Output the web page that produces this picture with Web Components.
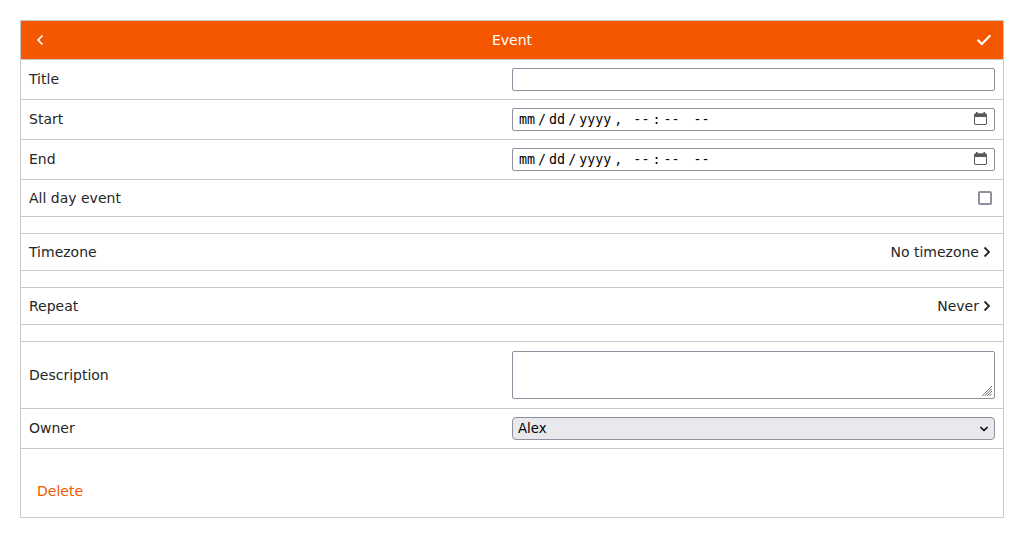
<!DOCTYPE html>
<html lang="en">
<head>
<meta charset="utf-8">
<title>Event</title>
<style>
body { margin: 20px; background: #fff; color: #262626; font: 14px/20px "DejaVu Sans", sans-serif; }
</style>
</head>
<body>
<event-form>
  <form-header>Event</form-header>
  <form-row label="Title"><field-box></field-box></form-row>
  <form-row label="Start"><date-field></date-field></form-row>
  <form-row label="End"><date-field></date-field></form-row>
  <form-row label="All day event" style="--h:36px"><check-box></check-box></form-row>
  <form-row style="--h:16px"></form-row>
  <form-row label="Timezone" style="--h:36px"><link-value>No timezone</link-value></form-row>
  <form-row style="--h:16px"></form-row>
  <form-row label="Repeat" style="--h:36px"><link-value>Never</link-value></form-row>
  <form-row style="--h:16px"></form-row>
  <form-row label="Description" style="--h:66px"><text-area></text-area></form-row>
  <form-row label="Owner"><select-box>Alex</select-box></form-row>
  <form-footer>Delete</form-footer>
</event-form>
<script>
const define = (name, html) => customElements.define(name, class extends HTMLElement {
  constructor() {
    super();
    const t = document.createElement('template');
    t.innerHTML = html;
    this.attachShadow({ mode: 'open' }).append(t.content.cloneNode(true));
    const label = this.shadowRoot.querySelector('.label');
    if (label) label.textContent = this.getAttribute('label') || '';
  }
});

define('event-form', `<style>
:host { display: flex; flex-direction: column; border: 1px solid #c8c8c8; }
</style><slot></slot>`);

define('form-header', `<style>
:host { display: grid; grid-template-columns: 38px 1fr 38px; align-items: center; justify-items: center;
  height: 38px; background: #f55600; color: #fff; border-bottom: 1px solid #c8c8c8; }
svg { display: block; fill: none; stroke: #fff; }
</style>
<svg width="16" height="16" viewBox="0 0 16 16" stroke-width="1.7"><path d="M10.5 3.5 6 8l4.5 4.5"/></svg>
<span><slot></slot></span>
<svg width="16" height="16" viewBox="0 0 16 16" stroke-width="2.1"><path d="M1.6 7.7 5.8 11.9 14.4 3.3"/></svg>`);

define('form-row', `<style>
:host { display: grid; grid-template-columns: 1fr 483px; align-items: center; box-sizing: content-box;
  height: var(--h, 39px); padding: 0 8px; border-bottom: 1px solid #c8c8c8; }
.label:not(:empty) { margin-bottom: 1px; }
</style><span class="label"></span><slot></slot>`);

define('field-box', `<style>
:host { display: block; box-sizing: border-box; height: 23px; border: 1px solid #8f8f9d; border-radius: 2px; background: #fff; }
</style>`);

define('date-field', `<style>
:host { display: flex; align-items: center; box-sizing: border-box; height: 23px; padding: 0 7px 0 6px;
  border: 1px solid #8f8f9d; border-radius: 2px; background: #fff; color: #000;
  font: 13.333px/17px "DejaVu Sans Mono", monospace; gap: 3px; white-space: pre; }
svg { display: block; margin: 0 0 2px auto; }
</style>
<span>mm</span><span>/</span><span>dd</span><span>/</span><span>yyyy</span><span>, </span><span>--</span><span>:</span><span>--</span><span> </span><span>--</span>
<svg width="13" height="13" viewBox="0 0 13 13"><path fill="#5b5b5f" fill-rule="evenodd" d="M2 0h1.6v1.3h5.8V0H11v1.3h.8L13 2.5v9.3L11.8 13H1.2L0 11.8V2.5l1.2-1.2H2zM1 5v6.5l.5.5h10l.5-.5V5z"/></svg>`);

define('check-box', `<style>
:host { display: block; box-sizing: border-box; width: 14px; height: 14px; margin-right: 3px; justify-self: end;
  border: 2px solid #8f8f9d; border-radius: 2px; }
</style>`);

define('link-value', `<style>
:host { display: flex; align-items: center; justify-content: flex-end; }
svg { display: block; fill: none; stroke: #262626; }
</style><slot></slot><svg width="16" height="16" viewBox="0 0 16 16" stroke-width="1.8"><path d="M5.5 3.5 10 8l-4.5 4.5"/></svg>`);

define('text-area', `<style>
:host { display: flex; align-items: flex-end; justify-content: flex-end; box-sizing: border-box; height: 48px;
  padding: 0 2px 2px 0; border: 1px solid #8f8f9d; border-radius: 2px; }
svg { display: block; }
</style><svg width="10" height="10" viewBox="0 0 10 10" fill="none" stroke="#666" stroke-width=".9"><path d="M0 10 10 0M2.5 10 10 2.5M5 10l5-5M7.5 10 10 7.5"/></svg>`);

define('select-box', `<style>
:host { display: flex; align-items: center; justify-content: space-between; box-sizing: border-box; height: 23px;
  padding: 0 5px; border: 1px solid #8f8f9d; border-radius: 4px; background: #e9e9ed; color: #000;
  font: 13.333px/17px "DejaVu Sans", sans-serif; }
svg { display: block; }
</style><span><slot></slot></span><svg width="10" height="10" viewBox="0 0 10 10" fill="none" stroke="#000" stroke-width="1.5"><path d="M1.4 3 5 6.5 8.6 3"/></svg>`);

define('form-footer', `<style>
:host { display: flex; align-items: center; height: 36px; padding: 24px 16px 8px; color: #f55600; }
</style><span><slot></slot></span>`);
</script>
</body>
</html>
